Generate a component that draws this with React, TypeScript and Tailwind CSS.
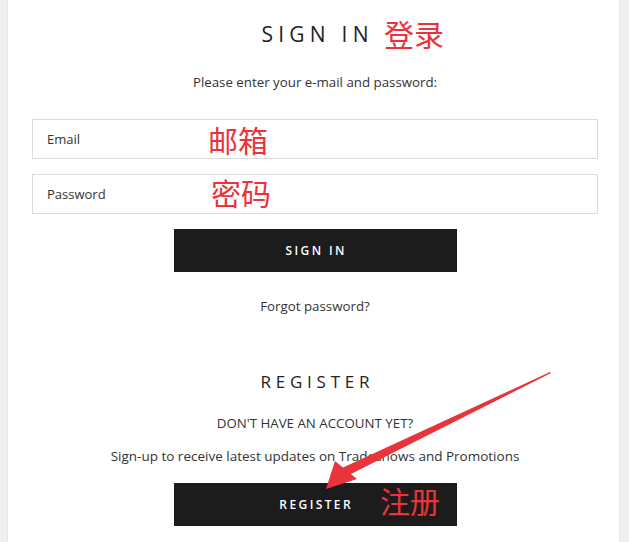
export default function App() {
  const font = { fontFamily: '"Open Sans", "Noto Sans CJK SC", sans-serif' };

  return (
    <div className="relative flex w-full h-[542px] bg-[#efefef] overflow-hidden" style={font}>
      <main className="bg-white ml-[7px] mr-[9px] pl-[3px] flex-1 flex flex-col items-center border-l border-r border-[#e6e6e6]">
        {/* Sign in */}
        <h1 className="mt-[20px] text-[21px] leading-[28px] tracking-[0.25em] text-[#222] font-normal pl-[0.25em]">
          SIGN IN
        </h1>
        <p className="mt-[24px] text-[13.3px] leading-[20px] text-[#333]">
          Please enter your e-mail and password:
        </p>

        <div className="mt-[27px] w-[566px] flex flex-col gap-[15px]">
          <input
            placeholder="Email"
            className="h-[40px] w-full border border-[#dcdcdc] px-[14px] text-[13px] text-[#333] placeholder:text-[#333] outline-none"
          />
          <input
            type="password"
            placeholder="Password"
            className="h-[40px] w-full border border-[#dcdcdc] px-[14px] text-[13px] text-[#333] placeholder:text-[#333] outline-none"
          />
        </div>

        <button className="mt-[15px] w-[283px] h-[43px] bg-[#1c1c1c] text-white text-[12px] font-semibold tracking-[0.2em] pl-[0.2em]">
          SIGN IN
        </button>

        <a className="mt-[24px] text-[13.3px] leading-[20px] text-[#333]">Forgot password?</a>

        {/* Register */}
        <h2 className="mt-[54px] text-[17px] leading-[24px] tracking-[0.28em] text-[#222] font-normal pl-[0.28em]">
          REGISTER
        </h2>
        <p className="mt-[19px] text-[13.3px] leading-[20px] text-[#333]">DON'T HAVE AN ACCOUNT YET?</p>
        <p className="mt-[13px] text-[13.5px] leading-[20px] text-[#333]">
          Sign-up to receive latest updates on Tradeshows and Promotions
        </p>
        <button className="mt-[17px] w-[283px] h-[43px] bg-[#1c1c1c] text-white text-[12px] font-semibold tracking-[0.2em] pl-[0.2em]">
          REGISTER
        </button>
      </main>

      {/* Red annotations */}
      <span className="absolute left-[384px] top-[16px] text-[30px] leading-[38px] text-[#e8343a]">登录</span>
      <span className="absolute left-[208px] top-[122px] text-[30px] leading-[38px] text-[#e8343a]">邮箱</span>
      <span className="absolute left-[211px] top-[175px] text-[30px] leading-[38px] text-[#e8343a]">密码</span>
      <span className="absolute left-[380px] top-[483px] text-[30px] leading-[38px] text-[#e8343a]">注册</span>

      <svg className="absolute left-0 top-0 pointer-events-none" width="629" height="542" viewBox="0 0 629 542">
        <polygon points="550,372 551,373 347,476 342,468" fill="#e8343a" />
        <polygon points="326,489 335,461 357,479" fill="#e8343a" />
      </svg>
    </div>
  );
}
